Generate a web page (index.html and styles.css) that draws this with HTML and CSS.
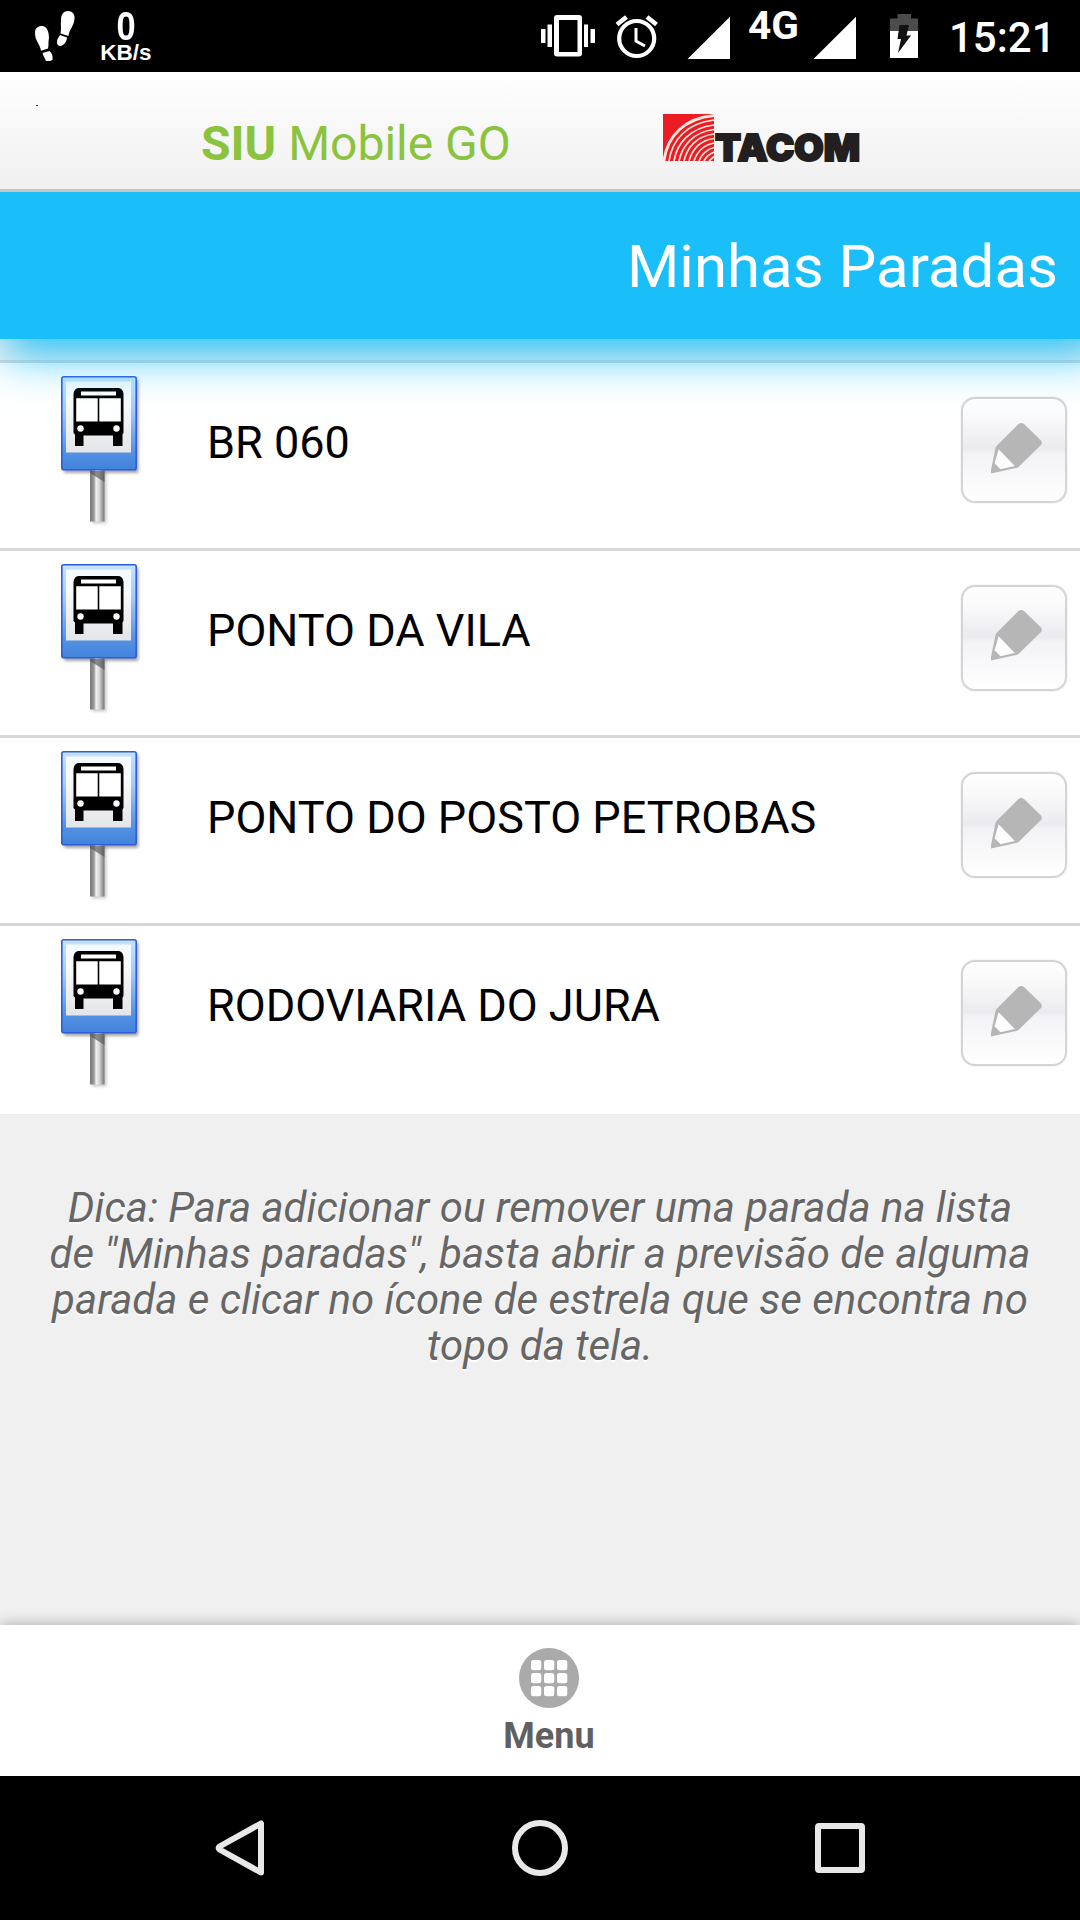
FILE: index.html
```html
<!DOCTYPE html>
<html lang="pt-BR">
<head>
<meta charset="utf-8">
<title>SIU Mobile GO - Minhas Paradas</title>
<link rel="stylesheet" href="styles.css">
</head>
<body>
<svg class="defs" width="0" height="0" aria-hidden="true">
  <defs>
    <linearGradient id="sign-blue" x1="0" y1="0" x2="0" y2="1">
      <stop offset="0" stop-color="#c4e4ff"/><stop offset=".35" stop-color="#a5cbfa"/><stop offset=".8" stop-color="#5592e2"/><stop offset="1" stop-color="#4282dc"/>
    </linearGradient>
    <linearGradient id="sign-panel" x1="0" y1="0" x2="0" y2="1">
      <stop offset="0" stop-color="#f4faff"/><stop offset=".3" stop-color="#f8fafc"/><stop offset="1" stop-color="#e4e5e8"/>
    </linearGradient>
    <linearGradient id="pole">
      <stop offset="0" stop-color="#777"/><stop offset=".28" stop-color="#9a9a9a"/><stop offset=".42" stop-color="#f2f2f2"/><stop offset=".65" stop-color="#d5d5d5"/><stop offset="1" stop-color="#747474"/>
    </linearGradient>
    <filter id="soft" x="-20%" y="-20%" width="140%" height="140%"><feGaussianBlur stdDeviation="1.800"/></filter>
    <clipPath id="logo-box"><rect width="51" height="47"/></clipPath>
    <symbol id="bus-stop" viewBox="0 0 84 154">
      <rect x="3" y="3" width="74.500" height="94" rx="2" fill="#000" opacity=".35" filter="url(#soft)"/>
      <rect x="31" y="96" width="14.500" height="51.500" fill="#000" opacity=".2" filter="url(#soft)"/>
      <rect x="29" y="94" width="14.500" height="51.500" fill="url(#pole)"/>
      <path d="M29 95H43.500V106L29 97Z" fill="#555" opacity=".65"/>
      <rect x=".8" y=".8" width="74.400" height="93" rx="2" fill="url(#sign-blue)" stroke="#2f5bdc" stroke-width="1.600"/>
      <rect x="5" y="5.500" width="65" height="71" fill="url(#sign-panel)"/>
      <path d="M17 12H58Q62 13 62.500 18V57L61.500 58.500V70H52V59.500H22.500V70H14V58.500L12.500 57V18Q13 13 17 12Z" fill="#000"/>
      <path d="M20 15.500H55V19.500H20ZM15.200 22.300H36.700V45.500H15.200ZM38.300 22.300H59.800V45.500H38.300Z" fill="#fff"/>
      <circle cx="19.500" cy="52.500" r="3.200" fill="#fff"/><circle cx="55.500" cy="52.500" r="3.200" fill="#fff"/>
    </symbol>
    <symbol id="pencil" viewBox="0 0 52 52">
      <path d="M27.500 2Q30 -.2 33 2L49.500 18Q52 21 50 23L28 44.500Q27 45.500 25 46L0 51.500V48L4.500 26Q5 24 7 22.500Z" fill="#b6b6b6"/>
      <path d="M7.600 27.200L23.800 44L9.500 47.300L3.600 41.200Z" fill="#fdfdfe"/>
    </symbol>
  </defs>
</svg>

<main class="phone">
  <header class="status">
    <svg class="steps" width="41" height="51" viewBox="34 11 41 51" fill="#fff">
      <path d="M35 33C35 28 38 26 42 26C47 26 49 32 49 38C48 43 49 45 48 48.500L41 50.700C40 44 35 41 35 33ZM42.500 53L49.500 51C52 53 53 56 52.500 60L50 61H46C45 58 43 56 42.500 53Z"/>
      <path d="M61 20C61 14 64 11 68 11C73 11 75 15 74.500 19C74 26 69 30 68.500 36L60.500 33.500C61.500 29 60.500 25 61 20ZM60 35L67 37.600C67 41 64 46 60 46C57 46 56.500 42 57.500 39Z"/>
    </svg>
    <div class="rate"><span class="rate-n">0</span><span class="rate-u">KB/s</span></div>
    <svg class="status-icons" width="384" height="72" viewBox="536 0 384 72" fill="#fff">
      <path fill-rule="evenodd" d="M557 15H579Q582 15 582 18V53.500Q582 56.500 579 56.500H557Q554 56.500 554 53.500V18Q554 15 557 15ZM559 20V52H577.500V20Z"/>
      <path d="M541 29H545.500V43H541ZM547.500 24.500H552V47H547.500ZM584 24.500H588V47H584ZM590.500 29H595V43H590.500Z"/>
      <g fill="none" stroke="#fff"><circle cx="636.700" cy="38.500" r="17.500" stroke-width="4.200"/><path d="M636 28V41L645 46" stroke-width="3"/><path d="M617 24.500L626.500 17M647 17L656.500 24.500" stroke-width="4.500"/></g>
      <path d="M687.500 59L730 16.700V59ZM813.500 59L856 16.700V59Z"/>
      <text class="net" x="748" y="39" textLength="51" lengthAdjust="spacingAndGlyphs">4G</text>
      <path d="M890 31V18.500H897.500V14H911V18.500H918V31Z" fill="#4c4c4c"/>
      <path d="M890 31H918V58H890Z"/>
      <path d="M899.500 25H909L906.500 35.500H911L898 53L901 39H897.500Z" fill="#111"/>
    </svg>
    <span class="clock">15:21</span>
  </header>

  <div class="brand">
    <span class="dot"></span>
    <h1 class="app"><b>SIU</b> Mobile GO</h1>
    <svg class="tacom" width="200" height="70" viewBox="0 0 200 70">
      <g clip-path="url(#logo-box)">
        <rect width="51" height="47" fill="#ed1c24"/>
        <g fill="none" stroke="#ffe6dc" stroke-width="1.700">
          <path d="M1 47C4 22 22 4 51 1.500" stroke-width="2.800"/><path d="M6 47C9 26 24 9 51 6"/><path d="M11 47C14 29 27 14 51 11"/><path d="M16 47C19 32 30 18 51 15.500"/><path d="M21 47C24 34 33 22 51 20"/><path d="M26 47C29 36 37 26 51 24.500"/><path d="M31 47C34 38 41 31 51 29"/><path d="M36 47C38 41 44 35 51 33.500"/><path d="M41 47C43 43 46 40 51 38"/><path d="M46 47L51 42.500"/>
        </g>
      </g>
      <text class="tacom-name" x="52" y="46.500" textLength="145" lengthAdjust="spacingAndGlyphs">TACOM</text>
    </svg>
  </div>

  <h2 class="title">Minhas Paradas</h2>

  <ul class="stops">
    <li class="stop"><svg class="sign"><use href="#bus-stop"/></svg><span class="name">BR 060</span><button class="edit" aria-label="Editar"><svg width="52" height="52"><use href="#pencil"/></svg></button></li>
    <li class="stop"><svg class="sign"><use href="#bus-stop"/></svg><span class="name">PONTO DA VILA</span><button class="edit" aria-label="Editar"><svg width="52" height="52"><use href="#pencil"/></svg></button></li>
    <li class="stop"><svg class="sign"><use href="#bus-stop"/></svg><span class="name">PONTO DO POSTO PETROBAS</span><button class="edit" aria-label="Editar"><svg width="52" height="52"><use href="#pencil"/></svg></button></li>
    <li class="stop"><svg class="sign"><use href="#bus-stop"/></svg><span class="name">RODOVIARIA DO JURA</span><button class="edit" aria-label="Editar"><svg width="52" height="52"><use href="#pencil"/></svg></button></li>
  </ul>

  <p class="tip">Dica: Para adicionar ou remover uma parada na lista<br>de "Minhas paradas", basta abrir a previsão de alguma<br>parada e clicar no ícone de estrela que se encontra no<br>topo da tela.</p>

  <footer class="menu">
    <svg width="60" height="60" viewBox="0 0 60 60">
      <circle cx="30" cy="30" r="30" fill="#aaa"/>
      <g fill="#fff">
        <rect x="12" y="12" width="10.300" height="10.300" rx="2.500"/><rect x="25" y="12" width="10.300" height="10.300" rx="2.500"/><rect x="38" y="12" width="10.300" height="10.300" rx="2.500"/>
        <rect x="12" y="25" width="10.300" height="10.300" rx="2.500"/><rect x="25" y="25" width="10.300" height="10.300" rx="2.500"/><rect x="38" y="25" width="10.300" height="10.300" rx="2.500"/>
        <rect x="12" y="38" width="10.300" height="10.300" rx="2.500"/><rect x="25" y="38" width="10.300" height="10.300" rx="2.500"/><rect x="38" y="38" width="10.300" height="10.300" rx="2.500"/>
      </g>
    </svg>
    <span class="menu-label">Menu</span>
  </footer>

  <nav class="keys">
    <svg width="50" height="58" viewBox="215 1819 50 58"><path d="M261 1823.500V1872.500L219.500 1849.500Q218 1848 219.500 1846.500Z"/></svg>
    <svg width="58" height="58" viewBox="0 0 58 58"><circle cx="29" cy="29" r="25"/></svg>
    <svg width="50" height="58" viewBox="0 0 50 58"><rect x="3" y="7" width="44" height="44" rx="1"/></svg>
  </nav>
</main>
</body>
</html>
```
FILE: styles.css
```css
* { box-sizing: border-box; }
body { margin: 0; font-family: Roboto, "Liberation Sans", sans-serif; background: #f0f0f0; }
.defs { display: block; height: 0; }
.phone { width: 1080px; height: 1920px; display: flex; flex-direction: column; overflow: hidden; }

.status { flex: none; height: 72px; background: #000; color: #fff; display: flex; align-items: flex-start; padding-left: 34px; }
.steps { margin-top: 11px; }
.rate { width: 60px; margin-left: 21px; padding-top: 9px; display: flex; flex-direction: column; align-items: center; font-family: "Liberation Sans", sans-serif; font-weight: bold; }
.rate-n { font-size: 40px; line-height: 34px; transform: scaleX(.86); }
.rate-u { font-size: 22.500px; line-height: 19px; }
.status-icons { margin-left: 380px; }
.net { font: 700 38px Roboto, sans-serif; }
.clock { margin-left: 29px; font-size: 42px; font-weight: 500; line-height: 75px; }

.brand { flex: none; position: relative; z-index: 2; height: 120px; display: flex; align-items: flex-start; border-bottom: 3px solid #c5c5c5; background: linear-gradient(#fff, #f0f0f0); }
.dot { width: 2px; height: 1px; margin: 33px 165px 0 36px; background: #333; }
.app { width: 462px; margin: 43px 0 0 -2px; font-size: 48px; line-height: 58px; font-weight: 400; color: #8ac43f; }
.app b { font-weight: 700; }
.tacom { margin-top: 42px; }
.tacom-name { font: 900 37px Inter, sans-serif; fill: #231f20; stroke: #231f20; stroke-width: 2px; }

.title { flex: none; position: relative; z-index: 1; height: 147px; margin: 0; padding-right: 22px; background: #1abff9; color: #fff; font-size: 60px; font-weight: 400; line-height: 150px; text-align: right; box-shadow: 14px 4px 44px 10px #1abff9; }

.stops { flex: none; list-style: none; height: 754px; margin: 21px 0 0; padding: 0; background: #fff; }
.stop { height: 187.700px; border-top: 3px solid #d8d8d8; display: flex; align-items: flex-start; }
.sign { flex: none; width: 84px; height: 154px; margin: 13px 0 0 61px; }
.name { flex: 1; margin: 53px 0 0 62px; font-size: 45px; line-height: 54px; color: #000; }
.edit { width: 106px; height: 106px; margin: 34px 13px 0 0; padding: 0 0 5px 5px; display: flex; align-items: center; justify-content: center; border: 2px solid #d4d4d6; border-radius: 14px; background: linear-gradient(#fff, #f9f9fa 20%, #ebebef 49%, #f3f3f6 54%, #fff); box-shadow: 0 0 2px rgba(0, 0, 0, .12); }

.tip { margin: 0; padding-top: 71px; flex: 1; font-size: 42px; line-height: 46px; font-style: italic; text-align: center; color: #666; text-shadow: 0 2px 1px #fff; }

.menu { flex: none; height: 151px; padding: 23px 0 0 18px; display: flex; flex-direction: column; align-items: center; gap: 7px; background: #fff; box-shadow: 0 0 14px rgba(0, 0, 0, .3); }
.menu-label { font-size: 36px; line-height: 42px; font-weight: 700; color: #606060; }

.keys { flex: none; position: relative; height: 144px; display: flex; align-items: center; justify-content: space-between; padding: 0 215px; background: #000; fill: none; stroke: #e8e8e8; stroke-width: 6px; stroke-linejoin: round; }
```
